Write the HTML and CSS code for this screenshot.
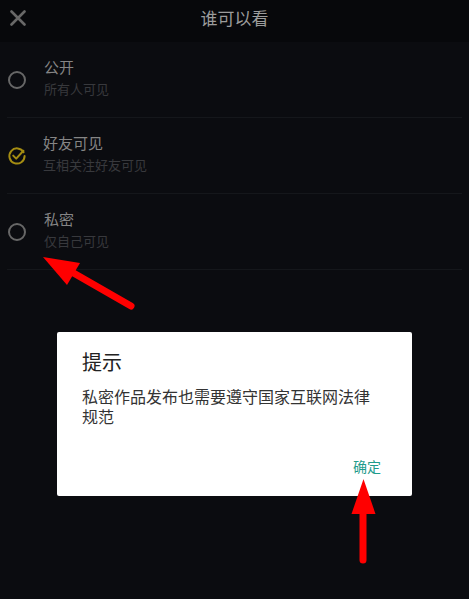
FILE: index.html
```html
<!DOCTYPE html>
<html lang="zh-CN">
<head>
    <meta charset="UTF-8">
    <meta name="viewport" content="width=device-width, initial-scale=1.0">
    <title>谁可以看</title>
    <link rel="stylesheet" href="styles.css">
</head>
<body>

    <div class="page">
        <header class="topbar">
            <svg class="close" width="16" height="16" viewBox="0 0 16 16">
                <path d="M1.5 1.5 L14.5 14.5 M14.5 1.5 L1.5 14.5" stroke="#686868" stroke-width="2.6" stroke-linecap="round" fill="none"/>
            </svg>
            <h1>谁可以看</h1>
        </header>

        <ul class="options">
            <li class="option">
                <span class="radio"></span>
                <div class="option-text">
                    <div class="option-title">公开</div>
                    <div class="option-desc">所有人可见</div>
                </div>
            </li>
            <li class="option">
                <svg class="checked" width="20" height="20" viewBox="0 0 20 20">
                    <path d="M16.6 6.2 A7.6 7.6 0 1 0 17.6 10" stroke="#a58d12" stroke-width="2" fill="none" stroke-linecap="round"/>
                    <path d="M6.2 9.6 L9.2 12.6 L16.4 4.8" stroke="#a58d12" stroke-width="2" fill="none" stroke-linecap="round" stroke-linejoin="round"/>
                </svg>
                <div class="option-text">
                    <div class="option-title">好友可见</div>
                    <div class="option-desc">互相关注好友可见</div>
                </div>
            </li>
            <li class="option">
                <span class="radio"></span>
                <div class="option-text">
                    <div class="option-title">私密</div>
                    <div class="option-desc">仅自己可见</div>
                </div>
            </li>
        </ul>
    </div>

    <div class="mask">
        <div class="dialog">
            <div class="dialog-title">提示</div>
            <div class="dialog-body">私密作品发布也需要遵守国家互联网法律规范</div>
            <div class="dialog-actions">
                <button type="button" class="dialog-btn">确定</button>
            </div>
        </div>
    </div>

    <!-- red annotation arrows -->
    <svg class="marks" width="469" height="599" viewBox="0 0 469 599">
        <polygon points="43,257 80,263 67,285" fill="#ff0000"/>
        <line x1="70" y1="271" x2="131" y2="306" stroke="#ff0000" stroke-width="7" stroke-linecap="round"/>
        <polygon points="363.5,479 375.5,514 351.5,514" fill="#ff0000"/>
        <line x1="363" y1="510" x2="363" y2="560" stroke="#ff0000" stroke-width="7" stroke-linecap="round"/>
    </svg>

</body>
</html>
```

FILE: styles.css
```css
html, body {
    margin: 0;
    padding: 0;
    height: 100%;
}
body {
    font-family: "Noto Sans CJK SC", "Noto Sans", sans-serif;
    background-color: #0b0c10;
    position: relative;
    overflow: hidden;
}
.page {
    height: 100%;
}
.topbar {
    height: 42px;
    background-color: #07080b;
    display: flex;
    align-items: center;
    justify-content: center;
    position: relative;
}
.close {
    position: absolute;
    left: 10px;
    top: 10px;
}
.topbar h1 {
    margin: 0;
    font-size: 17px;
    font-weight: normal;
    color: #9c9c9c;
    line-height: 22px;
    margin-top: -6px;
}
.options {
    list-style: none;
    margin: 0;
    padding: 0 7px;
}
.option {
    height: 75px;
    display: flex;
    align-items: center;
    border-bottom: 1px solid #15171b;
}
.radio {
    width: 14px;
    height: 14px;
    border: 2px solid #676767;
    border-radius: 50%;
    margin-left: 1px;
    margin-right: 18px;
    flex-shrink: 0;
}
.checked {
    margin-left: 0;
    margin-right: 16px;
    flex-shrink: 0;
}
.option-text {
    margin-bottom: 5px;
}
.option-title {
    font-size: 15px;
    line-height: 21px;
    color: #858585;
}
.option-desc {
    font-size: 13px;
    line-height: 18px;
    margin-top: 3px;
    color: #38393d;
}
.mask {
    position: absolute;
    top: 0;
    left: 0;
    right: 0;
    bottom: 0;
    display: flex;
    justify-content: center;
    align-items: flex-start;
    padding-top: 332px;
    box-sizing: border-box;
}
.dialog {
    width: 355px;
    background-color: #fff;
    border-radius: 2px;
    padding: 17px 0 20px 25px;
    box-sizing: border-box;
}
.dialog-title {
    font-size: 20px;
    line-height: 26px;
    color: #222;
}
.dialog-body {
    margin-top: 11px;
    padding-right: 36px;
    font-size: 16px;
    line-height: 20px;
    color: #333;
}
.dialog-actions {
    display: flex;
    justify-content: flex-end;
    margin-top: 30px;
    padding-right: 31px;
}
.dialog-btn {
    background: none;
    border: none;
    padding: 0;
    font-family: inherit;
    font-size: 14px;
    line-height: 20px;
    color: #1f9c8c;
}
.marks {
    position: absolute;
    top: 0;
    left: 0;
    pointer-events: none;
}
```
